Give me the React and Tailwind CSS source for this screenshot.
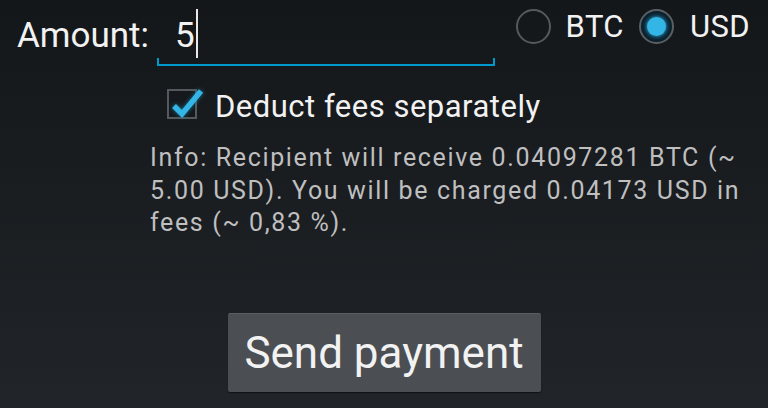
export default function App() {
  return (
    <div className="w-[768px] h-[408px] overflow-hidden bg-linear-to-b from-[#14171a] to-[#212428] font-['Roboto','Liberation_Sans',sans-serif] text-[#f2f2f2]">
      {/* Amount row */}
      <div className="flex items-start h-[66px]">
        <div className="w-[157px] pl-[17px] pt-[16px] text-[35px] leading-[40px]">Amount:</div>
        <div className="w-[338px] flex flex-col">
          <div className="h-[58px] pt-[9px] pl-[18px] flex items-start">
            <span className="mt-[7px] text-[35px] leading-[40px]">5</span>
            <span className="ml-px h-[49px] w-[2px] bg-[#e8e8e8]" />
          </div>
          <div className="h-[8px] border-x-2 border-b-2 border-[#0099cc]" />
        </div>
        <div className="ml-auto pr-[18px] pt-[9px] flex items-center h-[44px] text-[31px] leading-[35px] tracking-[0.4px]">
          <span className="w-[35px] h-[35px] rounded-full border-2 border-[#55595d]" />
          <span className="ml-[15px]">BTC</span>
          <span className="ml-[15px] w-[35px] h-[35px] rounded-full border-2 border-[#5a5f64] bg-[radial-gradient(circle,#0e3a52_0%,#0b2230_60%,#101418_100%)] flex items-center justify-center">
            <span className="w-[19px] h-[19px] rounded-full bg-[#33b5e5] shadow-[0_0_4px_#33b5e5]" />
          </span>
          <span className="ml-[16px]">USD</span>
        </div>
      </div>

      {/* Checkbox row */}
      <div className="mt-[23px] ml-[167px] flex items-start">
        <div className="relative w-[30px] h-[30px] border-2 border-[#55595d] bg-[#15191d]">
          <svg className="absolute -left-[2px] -top-[2px] overflow-visible" width="40" height="40" viewBox="0 0 40 40">
            <path d="M7 17 L15 25 L34 2" fill="none" stroke="#33b5e5" strokeWidth="5.5" strokeLinejoin="miter" style={{ filter: 'drop-shadow(0 0 2px #1b6f90)' }} />
          </svg>
        </div>
        <span className="ml-[18px] text-[31px] leading-[36px] tracking-[0.5px]">Deduct fees separately</span>
      </div>

      {/* Info */}
      <p className="mt-[17px] ml-[150px] w-[612px] text-[25px] leading-[32.7px] text-[#bfbfbf] tracking-[1.65px]">
        Info: Recipient will receive 0.04097281 BTC (~ 5.00 USD). You will be charged 0.04173 USD in fees (~ 0,83 %).
      </p>

      {/* Button */}
      <div className="mt-[73px] flex justify-center">
        <button className="w-[313px] h-[79px] rounded-[2px] bg-[#4b4e52] border-t border-[#5a5d61] shadow-[0_1px_1px_rgba(0,0,0,0.5)] text-[44px] leading-[50px] text-[#f2f2f2]">
          Send payment
        </button>
      </div>
    </div>
  );
}
